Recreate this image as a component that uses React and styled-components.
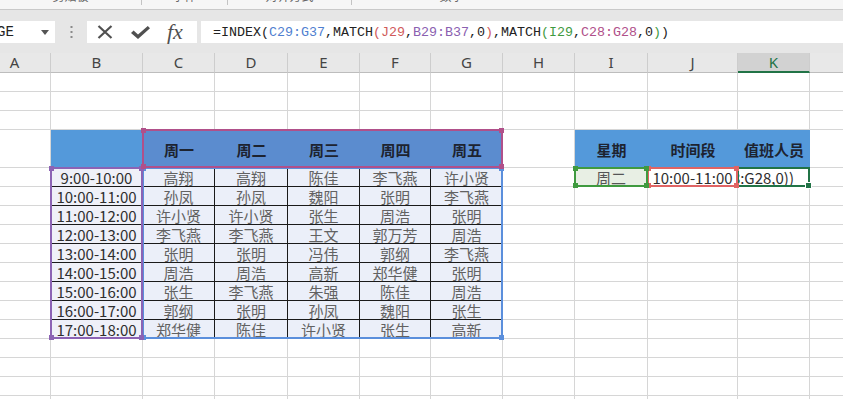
import React from "react";
import styled, { createGlobalStyle } from "styled-components";

const CJK = `"Noto Sans CJK SC", "Noto Sans", sans-serif`;
const MONO = `"Liberation Mono", "DejaVu Sans Mono", monospace`;

const GlobalStyle = createGlobalStyle`
  html, body {
    margin: 0;
    padding: 0;
    background: #fff;
  }
  body {
    width: 843px;
    height: 399px;
    overflow: hidden;
    font-family: ${CJK};
  }
`;

const Window = styled.div`
  width: 843px;
  height: 399px;
  overflow: hidden;
  display: flex;
  flex-direction: column;
`;

// cut-off bottom edge of the ribbon
const RibbonEdge = styled.div`
  height: 9px;
  flex: none;
  background: #f6f6f6;
  border-bottom: 1px solid #c9c9c9;
  overflow: hidden;
  display: flex;
`;

const RibbonGroup = styled.div`
  width: ${p => p.$w}px;
  flex: none;
  display: flex;
  justify-content: center;
  border-right: 1px solid ${p => (p.$sep ? "#c4c4c4" : "transparent")};
  box-sizing: border-box;
  height: 5px;
  overflow: hidden;
`;

const RibbonLabel = styled.span`
  font-size: 12px;
  line-height: 12px;
  margin-top: -10px;
  color: #666;
  white-space: nowrap;
`;

const FormulaBar = styled.div`
  height: 43px;
  flex: none;
  box-sizing: border-box;
  padding-top: 11px;
  background: #e6e6e6;
  display: flex;
  align-items: flex-start;
`;

const NameBox = styled.div`
  width: 55px;
  height: 22px;
  background: #fff;
  display: flex;
  align-items: center;
  justify-content: space-between;
  padding-right: 6px;
  box-sizing: border-box;
  overflow: hidden;
  font-family: ${MONO};
  font-size: 14px;
  color: #222;
`;

const NameText = styled.span`
  margin-left: -3px;
`;

const Grip = styled.div`
  width: 32px;
  height: 22px;
  display: flex;
  align-items: center;
  justify-content: center;
`;

const FuncBox = styled.div`
  width: 110px;
  height: 22px;
  background: #fff;
  display: flex;
  align-items: center;
  padding-left: 10px;
  box-sizing: border-box;
  gap: 18px;
`;

const Fx = styled.span`
  font-family: "Liberation Serif", serif;
  font-style: italic;
  font-size: 22px;
  line-height: 22px;
  color: #505050;
  margin-left: -1px;
`;

const FormulaInput = styled.div`
  flex: 1;
  margin-left: 4px;
  height: 22px;
  background: #fff;
  display: flex;
  align-items: center;
  padding-left: 12px;
  font-family: ${MONO};
  font-size: 13.33px;
  color: #222;
  white-space: pre;
`;

const Ref = styled.span`
  color: ${p => p.$color};
`;

const Sheet = styled.div`
  display: grid;
  grid-template-columns: 72px 92px 72px 73px 72px 71px 72px 72px 73px 90px 72px 72px;
  grid-template-rows: 20px 19px 19px 19px 38px repeat(13, 19px);
  margin-left: -21px;
`;

const ColHead = styled.div`
  grid-row: 1;
  grid-column: ${p => p.$c};
  box-sizing: border-box;
  background: ${p => (p.$active ? "#d2d2d2" : "#e8e8e8")};
  border-right: 1px solid #cdcdcd;
  border-bottom: ${p => (p.$active ? "2px solid #217346" : "1px solid #bdbdbd")};
  display: flex;
  align-items: center;
  justify-content: center;
  font-family: "Noto Sans", sans-serif;
  font-size: 15px;
  color: ${p => (p.$active ? "#217346" : "#444")};
  line-height: 1;
`;

const GridCell = styled.div`
  grid-row: ${p => p.$r};
  grid-column: ${p => p.$c};
  box-sizing: border-box;
  border-right: 1px solid #d6d6d6;
  border-bottom: 1px solid #d6d6d6;
`;

const HeadCell = styled.div`
  grid-row: 5;
  grid-column: ${p => p.$c};
  background: ${p => p.$tone};
  display: flex;
  align-items: center;
  justify-content: center;
  font-size: 15px;
  font-weight: 700;
  color: #1d2330;
  line-height: 1;
`;

const Entry = styled.div`
  grid-row: ${p => p.$r};
  grid-column: ${p => p.$c};
  box-sizing: border-box;
  background: ${p => p.$fill || "#ebeff9"};
  border-right: 1px solid ${p => p.$line || "#1a1a1a"};
  border-bottom: 1px solid ${p => p.$line || "#1a1a1a"};
  display: flex;
  align-items: center;
  justify-content: center;
  font-size: 15px;
  line-height: 1;
  color: ${p => p.$ink || "#626262"};
  white-space: nowrap;
  overflow: hidden;
`;

const EditCell = styled(Entry)`
  justify-content: flex-end;
  padding-right: 15px;
`;

const RangeBox = styled.div`
  grid-row: ${p => p.$rows};
  grid-column: ${p => p.$cols};
  margin: -1px 0 0 -1px;
  border: 2px solid ${p => p.$color};
  position: relative;
  pointer-events: none;
  z-index: 2;
`;

const Handle = styled.span`
  position: absolute;
  width: 5px;
  height: 5px;
  background: ${p => p.$color};
  ${p => (p.$v === "t" ? "top: -3px;" : "bottom: -3px;")}
  ${p => (p.$h === "l" ? "left: -3px;" : "right: -3px;")}
`;

const FillHandle = styled.span`
  position: absolute;
  width: 5px;
  height: 5px;
  right: -4px;
  bottom: -4px;
  background: #217346;
  border: 1px solid #fff;
`;

const days = ["周一", "周二", "周三", "周四", "周五"];

const schedule = [
  ["9:00-10:00", ["高翔", "高翔", "陈佳", "李飞燕", "许小贤"]],
  ["10:00-11:00", ["孙凤", "孙凤", "魏阳", "张明", "李飞燕"]],
  ["11:00-12:00", ["许小贤", "许小贤", "张生", "周浩", "张明"]],
  ["12:00-13:00", ["李飞燕", "李飞燕", "王文", "郭万芳", "周浩"]],
  ["13:00-14:00", ["张明", "张明", "冯伟", "郭纲", "李飞燕"]],
  ["14:00-15:00", ["周浩", "周浩", "高新", "郑华健", "张明"]],
  ["15:00-16:00", ["张生", "李飞燕", "朱强", "陈佳", "周浩"]],
  ["16:00-17:00", ["郭纲", "张明", "孙凤", "魏阳", "张生"]],
  ["17:00-18:00", ["郑华健", "陈佳", "许小贤", "张生", "高新"]]
];

const letters = ["A", "B", "C", "D", "E", "F", "G", "H", "I", "J", "K", ""];

const C = {
  blue: "#5b8fdc",
  red: "#e06464",
  purple: "#8c63b4",
  green: "#3f9a3f",
  magenta: "#b0508a"
};

function Range({ rows, cols, color, corners = ["tl", "tr", "bl", "br"] }) {
  return (
    <RangeBox $rows={rows} $cols={cols} $color={color}>
      {corners.map(k => (
        <Handle key={k} $v={k[0]} $h={k[1]} $color={color} />
      ))}
    </RangeBox>
  );
}

export default function App() {
  const empties = [];
  for (let r = 2; r <= 18; r++) {
    for (let c = 1; c <= 12; c++) {
      empties.push(<GridCell key={`${r}-${c}`} $r={r} $c={c} />);
    }
  }

  return (
    <Window>
      <GlobalStyle />
      <RibbonEdge>
        <RibbonGroup $w={142} $sep>
          <RibbonLabel>剪贴板</RibbonLabel>
        </RibbonGroup>
        <RibbonGroup $w={86} $sep>
          <RibbonLabel>字体</RibbonLabel>
        </RibbonGroup>
        <RibbonGroup $w={124} $sep>
          <RibbonLabel>对齐方式</RibbonLabel>
        </RibbonGroup>
        <RibbonGroup $w={200}>
          <RibbonLabel>数字</RibbonLabel>
        </RibbonGroup>
      </RibbonEdge>

      <FormulaBar>
        <NameBox>
          <NameText>GE</NameText>
          <svg width="8" height="5" viewBox="0 0 8 5">
            <path d="M0 0 L8 0 L4 5 Z" fill="#555" />
          </svg>
        </NameBox>
        <Grip>
          <svg width="3" height="12" viewBox="0 0 3 12">
            <rect x="0.5" y="0" width="2" height="2" fill="#8a8a8a" />
            <rect x="0.5" y="5" width="2" height="2" fill="#8a8a8a" />
            <rect x="0.5" y="10" width="2" height="2" fill="#8a8a8a" />
          </svg>
        </Grip>
        <FuncBox>
          <svg width="16" height="14" viewBox="0 0 16 14">
            <path d="M1.5 1 L14.5 13 M14.5 1 L1.5 13" stroke="#505050" strokeWidth="2.2" fill="none" />
          </svg>
          <svg width="19" height="13" viewBox="0 0 19 13">
            <path d="M0 7 L2.6 4.6 L7 8.6 L16.8 0 L19 2.2 L7 13 Z" fill="#505050" />
          </svg>
          <Fx>fx</Fx>
        </FuncBox>
        <FormulaInput>
          =INDEX(<Ref $color="#4f7fd0">C29:G37</Ref>,MATCH<Ref $color="#d05a5a">(J29</Ref>,
          <Ref $color="#8a60b0">B29:B37</Ref>,0<Ref $color="#d05a5a">)</Ref>,MATCH
          <Ref $color="#3f9a3f">(I29</Ref>,<Ref $color="#b0508a">C28:G28</Ref>,0
          <Ref $color="#3f9a3f">)</Ref>)
        </FormulaInput>
      </FormulaBar>

      <Sheet>
        {letters.map((l, i) => (
          <ColHead key={i} $c={i + 1} $active={l === "K"}>
            {l}
          </ColHead>
        ))}

        {empties}

        <HeadCell $c={2} $tone="#5499da" />
        {days.map((d, i) => (
          <HeadCell key={d} $c={3 + i} $tone="#5b8ccf">
            {d}
          </HeadCell>
        ))}

        {schedule.map(([time, names], ri) => (
          <React.Fragment key={time}>
            <Entry $r={6 + ri} $c={2} $fill="#eff0f8" $ink="#2e2e2e">
              {time}
            </Entry>
            {names.map((n, ci) => (
              <Entry key={ci} $r={6 + ri} $c={3 + ci}>
                {n}
              </Entry>
            ))}
          </React.Fragment>
        ))}

        <HeadCell $c={9} $tone="#5499da">星期</HeadCell>
        <HeadCell $c={10} $tone="#5499da">时间段</HeadCell>
        <HeadCell $c={11} $tone="#5499da">值班人员</HeadCell>

        <Entry $r={6} $c={9} $fill="#e8efe4" $line="#d6d6d6" $ink="#555">
          周二
        </Entry>
        <Entry $r={6} $c={10} $fill="#fff" $line="#d6d6d6" $ink="#2e2e2e">
          10:00-11:00
        </Entry>
        <EditCell $r={6} $c={11} $fill="#fff" $line="#d6d6d6" $ink="#2e2e2e">
          C28:G28,0))
        </EditCell>

        <RangeBox $rows="6 / 7" $cols="11 / 12" $color="#217346">
          <FillHandle />
        </RangeBox>
        <Range rows="6 / 7" cols="10 / 11" color={C.red} />
        <Range rows="6 / 7" cols="9 / 10" color={C.green} />

        <Range rows="6 / 15" cols="3 / 8" color={C.blue} />
        <Range rows="6 / 15" cols="2 / 3" color={C.purple} />
        <Range rows="5 / 6" cols="3 / 8" color={C.magenta} />
      </Sheet>
    </Window>
  );
}
